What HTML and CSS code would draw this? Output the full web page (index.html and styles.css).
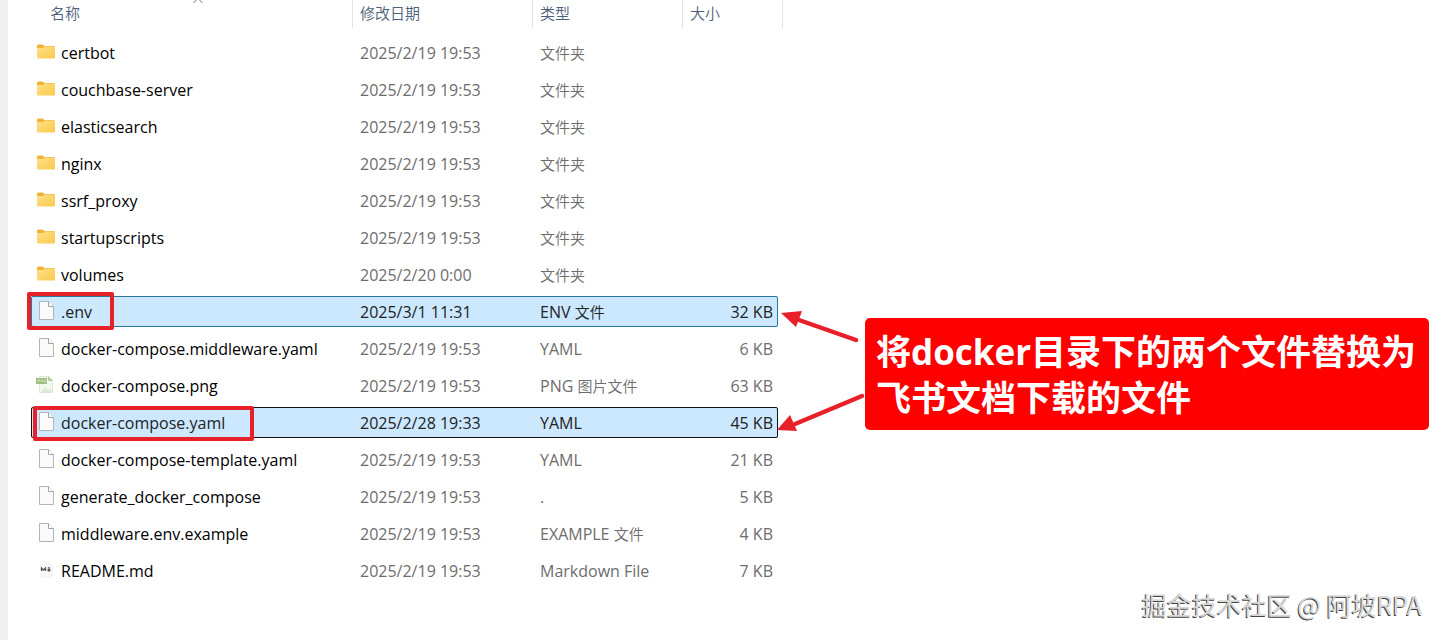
FILE: index.html
```html
<!DOCTYPE html>
<html lang="zh-CN">
<head>
<meta charset="utf-8">
<title>docker</title>
<link rel="stylesheet" href="styles.css">
</head>
<body>
<svg class="symbols" aria-hidden="true">
  <defs>
    <linearGradient id="fold" x1="0" y1="0" x2="1" y2="1"><stop offset="0" stop-color="#ffe08c"/><stop offset="1" stop-color="#fbc94b"/></linearGradient>
    <symbol id="folder" viewBox="0 0 20 20">
      <path d="M1 4q0-1.500 1.500-1.500h4l2 1.500H17.500q1.500 0 1.500 1.500V9H1z" fill="#efb233"/>
      <path d="M1 6H7L8.500 4.500H18q1 0 1 1v10q0 1-1 1H2q-1 0-1-1z" fill="url(#fold)"/>
    </symbol>
    <symbol id="file" viewBox="0 0 20 20">
      <path d="M3.500.5h9l5 5v13h-14z" fill="#fafafa" stroke="#b4b4b4"/>
      <path d="M12.500.5v5h5" fill="#fff" stroke="#a2a2a2"/>
    </symbol>
    <symbol id="image" viewBox="0 0 20 20">
      <path d="M3.500 1.500h9l4 4v12h-13z" fill="#f3f8f0" stroke="#dce8d5"/>
      <path d="M12.500 1.500v4h4" fill="#b3cf9f" stroke="#b3cf9f"/>
      <path d="M5 17l4-5 3 3 2-2 2 4z" fill="#dcebd3"/>
      <path d="M0 3h11v6H0z" fill="#9dbf83"/>
      <path d="M2 7V5h1.500v1H2M5 7V5l2 2V5M10 5H8.500v2H10V6" fill="none" stroke="#d4e5c8" stroke-width=".7"/>
    </symbol>
    <symbol id="markdown" viewBox="0 0 20 20">
      <path d="M4 1h9l4 4v13H4z" fill="#f6f6f6"/>
      <path d="M5.500 11V8l2 2 2-2v3M13 7v4M11.500 9.500L13 11l1.500-1.500" fill="none" stroke="#555" stroke-width="1.300"/>
    </symbol>
  </defs>
</svg>
<main class="explorer">
  <table class="files">
    <colgroup><col class="col-name"><col class="col-date"><col class="col-type"><col class="col-size"></colgroup>
    <thead>
      <tr>
        <th><button type="button">名称</button><svg class="sort" viewBox="0 0 12 6" aria-hidden="true"><path d="M1.500 5L6 .5 10.500 5"/></svg></th>
        <th><button type="button">修改日期</button></th>
        <th><button type="button">类型</button></th>
        <th><button type="button">大小</button></th>
      </tr>
    </thead>
    <tbody>
      <tr><td><svg class="icon"><use href="#folder"/></svg>certbot</td><td>2025/2/19 19:53</td><td><span class="zh">文件夹</span></td><td></td></tr>
      <tr><td><svg class="icon"><use href="#folder"/></svg>couchbase-server</td><td>2025/2/19 19:53</td><td><span class="zh">文件夹</span></td><td></td></tr>
      <tr><td><svg class="icon"><use href="#folder"/></svg>elasticsearch</td><td>2025/2/19 19:53</td><td><span class="zh">文件夹</span></td><td></td></tr>
      <tr><td><svg class="icon"><use href="#folder"/></svg>nginx</td><td>2025/2/19 19:53</td><td><span class="zh">文件夹</span></td><td></td></tr>
      <tr><td><svg class="icon"><use href="#folder"/></svg>ssrf_proxy</td><td>2025/2/19 19:53</td><td><span class="zh">文件夹</span></td><td></td></tr>
      <tr><td><svg class="icon"><use href="#folder"/></svg>startupscripts</td><td>2025/2/19 19:53</td><td><span class="zh">文件夹</span></td><td></td></tr>
      <tr><td><svg class="icon"><use href="#folder"/></svg>volumes</td><td>2025/2/20 0:00</td><td><span class="zh">文件夹</span></td><td></td></tr>
      <tr class="selected"><td><svg class="icon"><use href="#file"/></svg>.env</td><td>2025/3/1 11:31</td><td>ENV <span class="zh">文件</span></td><td>32 KB</td></tr>
      <tr><td><svg class="icon"><use href="#file"/></svg>docker-compose.middleware.yaml</td><td>2025/2/19 19:53</td><td>YAML</td><td>6 KB</td></tr>
      <tr><td><svg class="icon"><use href="#image"/></svg>docker-compose.png</td><td>2025/2/19 19:53</td><td>PNG <span class="zh">图片文件</span></td><td>63 KB</td></tr>
      <tr class="selected focused"><td><svg class="icon"><use href="#file"/></svg>docker-compose.yaml</td><td>2025/2/28 19:33</td><td>YAML</td><td>45 KB</td></tr>
      <tr><td><svg class="icon"><use href="#file"/></svg>docker-compose-template.yaml</td><td>2025/2/19 19:53</td><td>YAML</td><td>21 KB</td></tr>
      <tr><td><svg class="icon"><use href="#file"/></svg>generate_docker_compose</td><td>2025/2/19 19:53</td><td>.</td><td>5 KB</td></tr>
      <tr><td><svg class="icon"><use href="#file"/></svg>middleware.env.example</td><td>2025/2/19 19:53</td><td>EXAMPLE <span class="zh">文件</span></td><td>4 KB</td></tr>
      <tr><td><svg class="icon"><use href="#markdown"/></svg>README.md</td><td>2025/2/19 19:53</td><td>Markdown File</td><td>7 KB</td></tr>
    </tbody>
  </table>
</main>
<div class="mark mark-env"></div>
<div class="mark mark-yaml"></div>
<svg class="arrows" viewBox="0 0 90 130" aria-hidden="true">
  <path d="M79 35L22 15M85 91L18 119" fill="none" stroke="#e8202a" stroke-width="4.500" stroke-linecap="round"/>
  <path d="M4 8L25 6 19 22z" fill="#e8202a"/>
  <path d="M0 125L13 110 20 126z" fill="#e8202a"/>
</svg>
<p class="callout">将docker目录下的两个文件替换为<br>飞书文档下载的文件</p>
<p class="watermark">掘金技术社区 @ 阿坡RPA</p>
</body>
</html>
```
FILE: styles.css
```css
* { box-sizing: border-box; }
body {
  position: relative;
  min-height: 100vh;
  margin: 0;
  background: #fff;
  font-family: "Open Sans", "Noto Sans CJK SC", sans-serif;
  font-size: 16px;
  color: #111;
}
.symbols { position: absolute; width: 0; height: 0; }
.explorer {
  display: flex;
  align-items: flex-start;
  min-height: 100vh;
  padding-left: 23px;
  border-left: 8px solid #f0f0f0;
}
.files {
  table-layout: fixed;
  width: 747px;
  margin-top: -6px;
  border-spacing: 0 6px;
}
.col-name { width: 321px; }
.col-date { width: 180px; }
.col-type { width: 150px; }
th {
  position: relative;
  height: 31px;
  padding: 0 0 0 8px;
  text-align: left;
  vertical-align: top;
}
th:first-child { padding-left: 19px; }
th::after {
  content: "";
  position: absolute;
  top: 0;
  right: -1px;
  width: 1px;
  height: 28px;
  background: #e2e2e2;
}
th:last-child::after { right: -5px; }
th button {
  display: block;
  padding: 0;
  border: 0;
  background: none;
  font: 350 15px/26px "Noto Sans CJK SC", sans-serif;
  color: #4c607a;
}
.sort {
  position: absolute;
  top: -2px;
  left: 161px;
  width: 12px;
  height: 6px;
  fill: none;
  stroke: #777;
}
td {
  height: 31px;
  padding: 2px 0 0 8px;
  line-height: 29px;
  color: #6d6d6d;
  white-space: nowrap;
}
td:first-child { padding-left: 5px; color: #000; }
td:last-child { padding-right: 5px; text-align: right; }
.zh { font-size: 15px; font-weight: 350; line-height: 1; }
.icon {
  width: 20px;
  height: 20px;
  margin-right: 5px;
  vertical-align: -3px;
}
.selected td {
  background: #cce8ff;
  color: #222;
}
.selected {
  outline: 1px solid #26789f;
  outline-offset: -1px;
  border-radius: 2px;
}
.focused { outline-color: #111; }
.mark {
  position: absolute;
  border: 4px solid #e8202a;
  border-radius: 2px;
}
.mark-env { top: 292px; left: 27px; width: 87px; height: 38px; }
.mark-yaml { top: 406px; left: 33px; width: 221px; height: 35px; }
.arrows { position: absolute; top: 305px; left: 777px; width: 90px; height: 130px; }
.callout {
  position: absolute;
  top: 318px;
  left: 865px;
  margin: 0;
  padding: 11px 13px 9px 11px;
  border-radius: 5px;
  background: #f00;
  color: #fff;
  font-size: 35px;
  font-weight: 700;
  line-height: 46px;
  white-space: nowrap;
}
.watermark {
  position: absolute;
  right: 20px;
  bottom: 18px;
  margin: 0;
  font: 25px/36px "Noto Sans CJK SC", sans-serif;
  color: #d8d8d8;
  text-shadow: -1px 1px 0 #444;
}
```
